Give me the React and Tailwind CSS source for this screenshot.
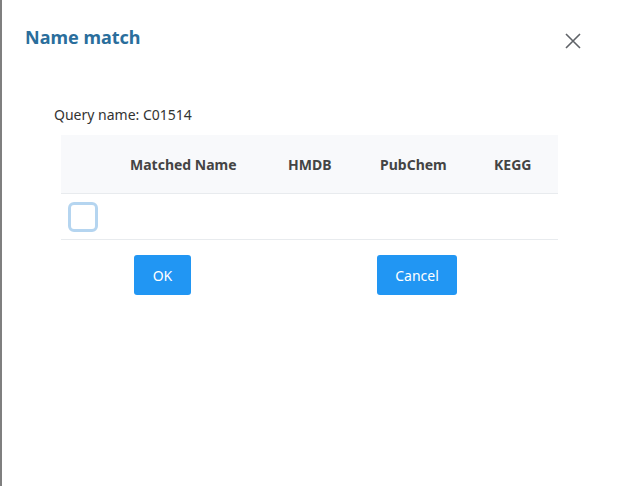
export default function App() {
  return (
    <div
      className="relative w-[618px] h-[486px] bg-white border-l-2 border-[#7f7f7f]"
      style={{ fontFamily: '"Noto Sans", "Open Sans", sans-serif' }}
    >
      {/* Header */}
      <div className="flex items-start justify-between pl-[23px] pr-[36px] pt-[24px]">
        <h2 className="text-[18px] font-bold leading-[26px] text-[#2a6e9c]">Name match</h2>
        <button className="mt-[8px] text-[#5f6368]">
          <svg width="18" height="18" viewBox="0 0 18 18" fill="none" stroke="currentColor" strokeWidth="1.6">
            <path d="M2 2l14 14M16 2L2 16" />
          </svg>
        </button>
      </div>

      <div className="pl-[52px] pt-[55px]">
        <p className="text-[14px] leading-[20px] text-[#333]">Query name: C01514</p>

        <div className="ml-[7px] mt-[10px] w-[497px]">
          <div className="grid grid-cols-[54px_158px_92px_114px_79px] h-[59px] items-center bg-[#f8f9fb] border-b border-[#e8ebee] text-[14px] font-bold text-[#444]">
            <div />
            <div className="pl-[15px]">Matched Name</div>
            <div className="pl-[15px]">HMDB</div>
            <div className="pl-[15px]">PubChem</div>
            <div className="pl-[15px]">KEGG</div>
          </div>
          <div className="h-[46px] flex items-center border-b border-[#e8ebee] pl-[7px]">
            <span className="block w-[30px] h-[30px] rounded-[6px] border-[3px] border-[#b5d5f0] bg-white" />
          </div>
        </div>

        <div className="flex pl-[80px] pt-[15px]">
          <button className="w-[57px] h-[40px] rounded-[3px] bg-[#2196f3] text-white text-[14px]">OK</button>
          <button className="ml-[186px] w-[80px] h-[40px] rounded-[3px] bg-[#2196f3] text-white text-[14px]">Cancel</button>
        </div>
      </div>
    </div>
  );
}
